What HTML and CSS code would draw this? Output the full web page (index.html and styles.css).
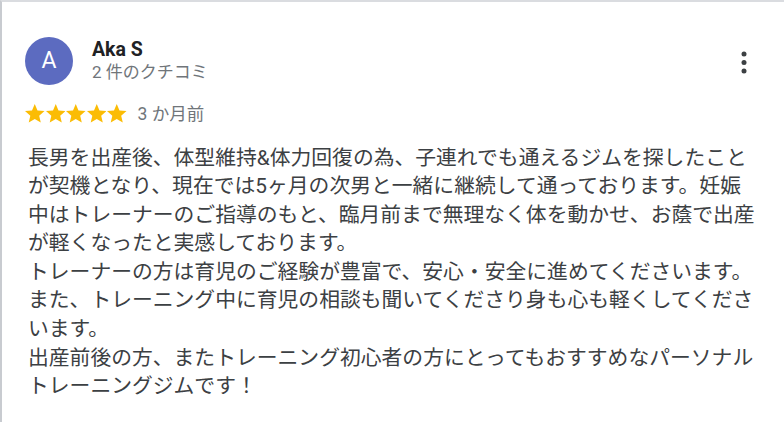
FILE: index.html
```html
<!DOCTYPE html>
<html lang="ja">
<head>
  <meta charset="UTF-8">
  <meta name="viewport" content="width=device-width, initial-scale=1.0">
  <title>クチコミ</title>
  <link rel="stylesheet" href="styles.css">
</head>
<body>
  <!-- Review card -->
  <div class="review">
    <div class="review-header">
      <div class="avatar">A</div>
      <div class="author">
        <div class="author-name">Aka S</div>
        <div class="author-meta">2 件のクチコミ</div>
      </div>
      <button class="menu-button" aria-label="メニュー">
        <svg width="24" height="24" viewBox="0 0 24 24">
          <circle cx="12" cy="5" r="2.5"/>
          <circle cx="12" cy="13.5" r="2.5"/>
          <circle cx="12" cy="22" r="2.5"/>
        </svg>
      </button>
    </div>

    <div class="rating">
      <div class="stars">
        <svg class="star" viewBox="2 2 20 20"><path d="M12 17.27L18.18 21l-1.64-7.03L22 9.24l-7.19-.61L12 2 9.19 8.63 2 9.24l5.46 4.73L5.82 21z"/></svg>
        <svg class="star" viewBox="2 2 20 20"><path d="M12 17.27L18.18 21l-1.64-7.03L22 9.24l-7.19-.61L12 2 9.19 8.63 2 9.24l5.46 4.73L5.82 21z"/></svg>
        <svg class="star" viewBox="2 2 20 20"><path d="M12 17.27L18.18 21l-1.64-7.03L22 9.24l-7.19-.61L12 2 9.19 8.63 2 9.24l5.46 4.73L5.82 21z"/></svg>
        <svg class="star" viewBox="2 2 20 20"><path d="M12 17.27L18.18 21l-1.64-7.03L22 9.24l-7.19-.61L12 2 9.19 8.63 2 9.24l5.46 4.73L5.82 21z"/></svg>
        <svg class="star" viewBox="2 2 20 20"><path d="M12 17.27L18.18 21l-1.64-7.03L22 9.24l-7.19-.61L12 2 9.19 8.63 2 9.24l5.46 4.73L5.82 21z"/></svg>
      </div>
      <span class="date">3 か月前</span>
    </div>

    <p class="review-text">長男を出産後、体型維持&amp;体力回復の為、子連れでも通えるジムを探したこと<br>が契機となり、現在では5ヶ月の次男と一緒に継続して通っております。妊娠<br>中はトレーナーのご指導のもと、臨月前まで無理なく体を動かせ、お蔭で出産<br>が軽くなったと実感しております。<br>トレーナーの方は育児のご経験が豊富で、安心・安全に進めてくださいます。<br>また、トレーニング中に育児の相談も聞いてくださり身も心も軽くしてくださ<br>います。<br>出産前後の方、またトレーニング初心者の方にとってもおすすめなパーソナル<br>トレーニングジムです！</p>
  </div>
</body>
</html>
```

FILE: styles.css
```css
/* General Styles */
body {
  margin: 0;
  background-color: #fff;
  font-family: Roboto, "Noto Sans CJK JP", sans-serif;
  color: #3c4043;
  border-top: 2px solid #dadce0;
  border-left: 2px solid #c8cbd0;
  height: 422px;
  box-sizing: border-box;
  overflow: hidden;
}

.review {
  padding: 35px 0 0 23px;
}

/* Header */
.review-header {
  display: flex;
  align-items: center;
  position: relative;
}

.avatar {
  width: 48px;
  height: 48px;
  border-radius: 50%;
  background-color: #5c6bc0;
  color: #fff;
  font-size: 23px;
  line-height: 48px;
  text-align: center;
}

.author {
  margin-left: 19px;
}

.author-name {
  font-size: 19.5px;
  font-weight: bold;
  color: #202124;
  line-height: 22px;
}

.author-meta {
  font-size: 17px;
  color: #70757a;
  line-height: 22px;
}

.menu-button {
  position: absolute;
  right: 28px;
  top: 10px;
  width: 24px;
  height: 28px;
  padding: 0;
  border: none;
  background: none;
  cursor: pointer;
}

.menu-button svg {
  fill: #3c4043;
  width: 24px;
  height: 28px;
}

/* Rating */
.rating {
  display: flex;
  align-items: center;
  margin-top: 18.5px;
}

.stars {
  display: flex;
  gap: 1px;
}

.star {
  width: 19.5px;
  height: 19.5px;
  fill: #fbbc04;
}

.date {
  margin-left: 11px;
  font-size: 17.5px;
  line-height: 20px;
  color: #70757a;
}

/* Body */
.review-text {
  margin: 20px 0 0 3px;
  width: 750px;
  font-size: 20.8px;
  line-height: 28.6px;
}
```
